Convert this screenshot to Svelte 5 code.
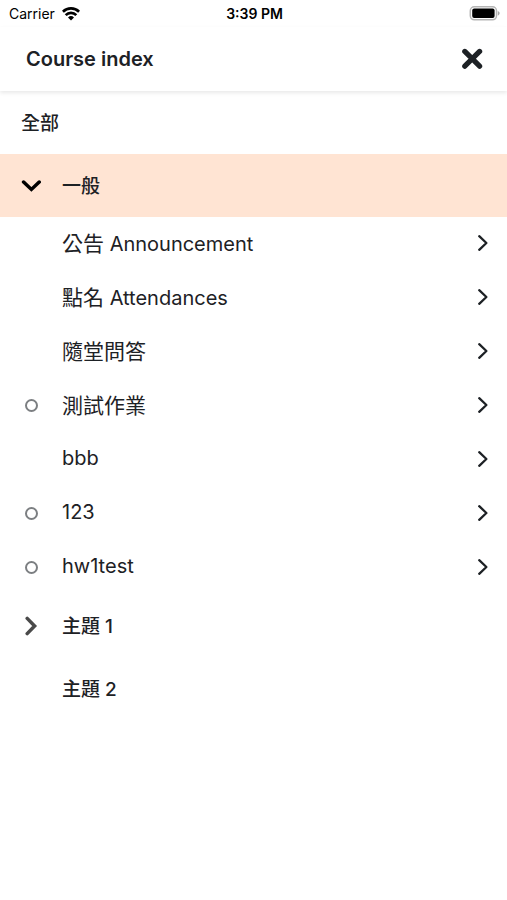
<script>
  let expanded = $state(true);
  let selected = $state("general");

  const modules = [
    { zh: "公告", en: "Announcement", completion: false },
    { zh: "點名", en: "Attendances", completion: false },
    { zh: "隨堂問答", completion: false },
    { zh: "測試作業", completion: true },
    { en: "bbb", completion: false },
    { en: "123", completion: true },
    { en: "hw1test", completion: true },
  ];

  function toggleGeneral() {
    selected = "general";
    expanded = !expanded;
  }
</script>

<div class="status">
  <span class="carrier">
    Carrier
    <svg width="18" height="14" viewBox="0 0 18 14" aria-hidden="true">
      <g fill="none" stroke="#000" stroke-width="2.7">
        <path d="M0.9 4.7a11.5 11.5 0 0 1 16.2 0" />
        <path d="M3.7 8.1a7.4 7.4 0 0 1 10.6 0" />
      </g>
      <path d="M9 13.6l-3-3.2a4.3 4.3 0 0 1 6 0z" />
    </svg>
  </span>
  <span class="time">3:39 PM</span>
  <span class="battery">
    <svg width="31" height="15" viewBox="0 0 31 15" aria-hidden="true">
      <rect x="1.3" y="0.8" width="26.2" height="13" rx="4" fill="#fff" stroke="#b5b5b5" stroke-width="1.5" />
      <rect x="3.2" y="2.6" width="22.4" height="9.4" rx="2" />
      <path d="M28.8 5c2.4 0.8 2.4 3.8 0 4.6z" fill="#a8a8a8" />
    </svg>
  </span>
</div>

<header>
  <h1>Course index</h1>
  <button class="close" aria-label="Close">
    <svg width="22" height="22" viewBox="0 0 22 22" aria-hidden="true">
      <path d="M3.8 3.4l14.8 14.8M18.6 3.4L3.8 18.2" stroke="#1d2125" stroke-width="5.2" stroke-linecap="round" />
    </svg>
  </button>
</header>

<main>
  <button class="row section" onclick={() => (selected = "all")}>
    <span class="name">全部</span>
  </button>

  <button
    class="row section"
    class:selected={selected === "general"}
    aria-expanded={expanded}
    onclick={toggleGeneral}
  >
    <span class="lead">
      <svg class:closed={!expanded} width="20" height="20" viewBox="0 0 20 20" aria-hidden="true">
        <path d="M2.6 6l7.8 7.4L18.2 6" fill="none" stroke="#000" stroke-width="3.5" stroke-linecap="round" />
      </svg>
    </span>
    <span class="name">一般</span>
  </button>

  {#if expanded}
    <ul>
      {#each modules as module}
        <li>
          <button class="row module">
            <span class="lead">
              {#if module.completion}
                <span class="circle"></span>
              {/if}
            </span>
            <span class="name">
              {#if module.zh}<span class="zh" lang="zh-Hant">{module.zh}</span>{/if}
              {module.en ?? ""}
            </span>
            <svg width="12" height="18" viewBox="0 0 12 18" aria-hidden="true">
              <path d="M2.2 2.2L9.4 9l-7.2 6.8" fill="none" stroke="#1d2125" stroke-width="2.3" stroke-linecap="round" stroke-linejoin="round" />
            </svg>
          </button>
        </li>
      {/each}
    </ul>
  {/if}

  <button class="row section" aria-expanded="false">
    <span class="lead">
      <svg width="20" height="20" viewBox="0 0 20 20" aria-hidden="true">
        <path d="M6.2 2.4l7.4 7.6-7.4 7.6" fill="none" stroke="#4a4a4a" stroke-width="3.5" stroke-linecap="round" />
      </svg>
    </span>
    <span class="name">主題 1</span>
  </button>

  <button class="row section">
    <span class="lead"></span>
    <span class="name">主題 2</span>
  </button>
</main>

<style>
  :global(body) {
    background: #fff;
    color: #1d2125;
    font-family: Inter, "Noto Sans CJK TC", sans-serif;
  }

  button {
    border: 0;
    background: none;
    color: inherit;
    font: inherit;
    text-align: left;
    cursor: pointer;
  }

  svg {
    display: block;
    flex: none;
  }

  .status {
    display: flex;
    align-items: center;
    height: 27px;
    padding: 0 7px 0 9px;
    color: #000;
    font-size: 14px;
  }

  .carrier,
  .battery {
    display: flex;
    flex: 1;
    align-items: center;
    gap: 7px;
  }

  .battery {
    justify-content: flex-end;
  }

  .time {
    font-weight: 600;
  }

  header {
    display: flex;
    align-items: center;
    justify-content: space-between;
    height: 64px;
    padding: 0 24px 0 26px;
    box-shadow: 0 2px 4px rgba(0, 0, 0, 0.09);
  }

  h1 {
    margin: 0;
    font-size: 20px;
    font-weight: 600;
  }

  .close {
    padding: 0;
  }

  .row {
    display: flex;
    align-items: center;
    width: 100%;
    padding: 0 18px 0 21px;
  }

  .section {
    height: 63px;
    font-size: 19px;
    font-weight: 500;
  }

  .selected {
    background: #ffe4d3;
  }

  ul {
    margin: -1px 0 0;
    padding: 0;
    list-style: none;
  }

  .module {
    height: 54px;
    font-size: 20px;
  }

  .lead {
    display: flex;
    flex: none;
    justify-content: center;
    width: 20px;
    margin-right: 21px;
  }

  .name {
    flex: 1;
    padding-bottom: 2px;
  }

  .zh {
    font-size: 21px;
  }

  .closed {
    transform: rotate(-90deg);
  }

  .circle {
    box-sizing: border-box;
    width: 13px;
    height: 13px;
    border: 2px solid #7c7f82;
    border-radius: 50%;
  }
</style>
